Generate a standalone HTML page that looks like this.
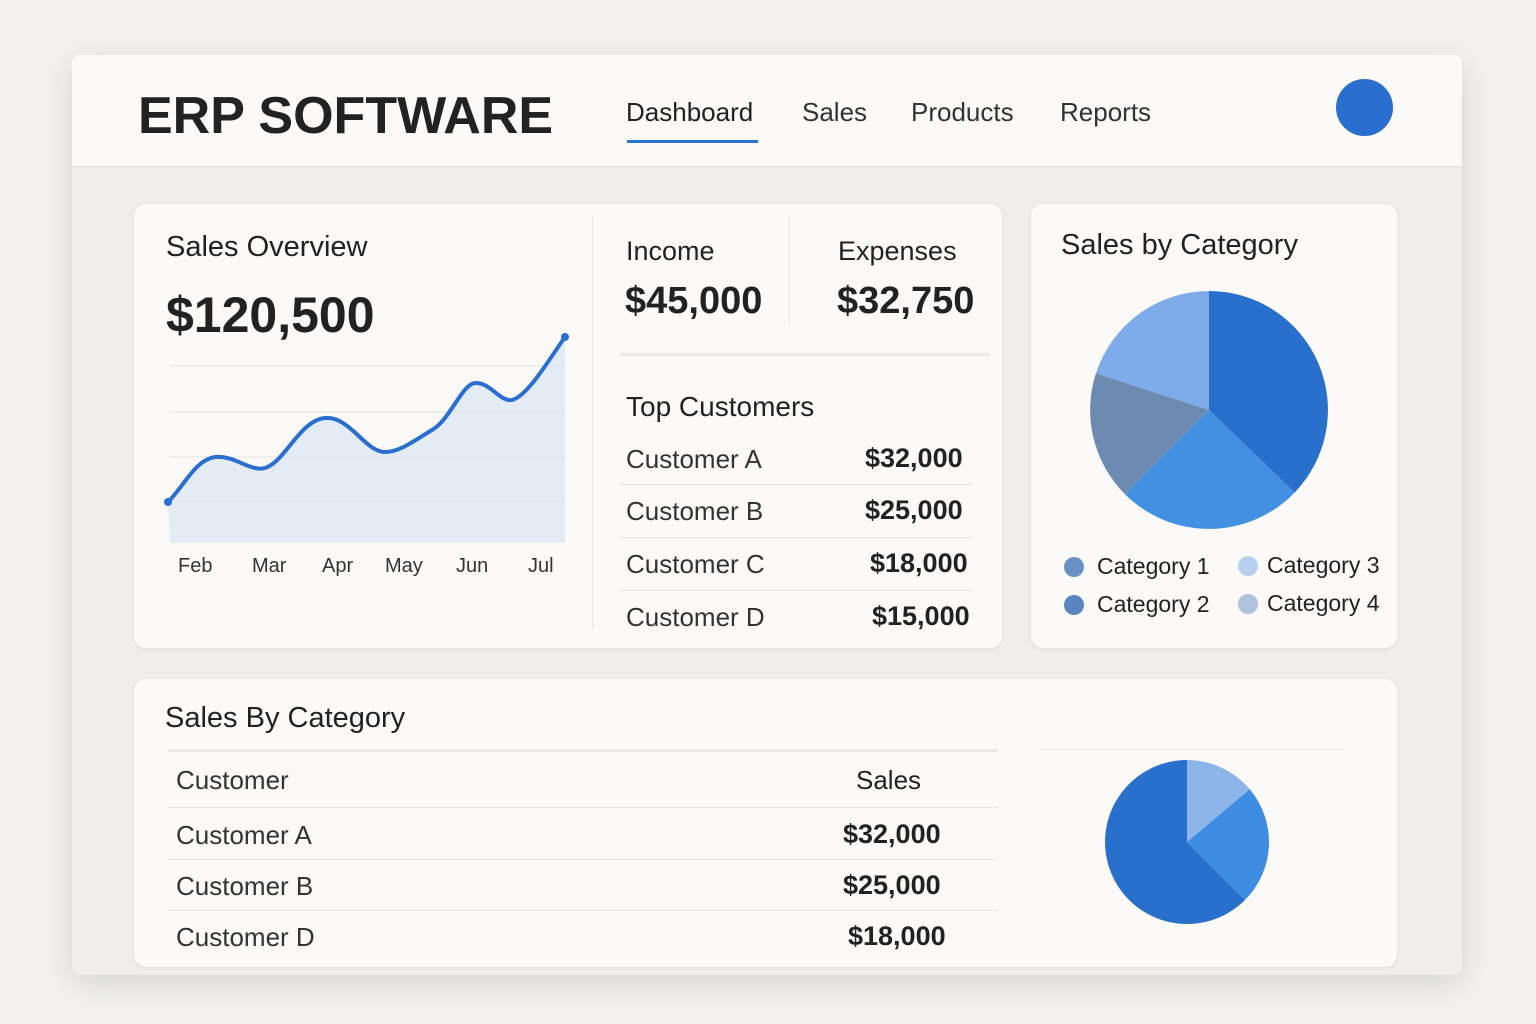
<!DOCTYPE html>
<html><head><meta charset="utf-8"><style>
*{margin:0;padding:0;box-sizing:border-box}
body{width:1536px;height:1024px;background:#f2f1ee;font-family:"Liberation Sans",sans-serif;color:#222;position:relative;overflow:hidden}
.abs{position:absolute}
.frame{left:72px;top:55px;width:1390px;height:920px;background:#efeeeb;border-radius:8px;box-shadow:0 8px 30px rgba(0,0,0,.12)}
.hdr{left:72px;top:55px;width:1390px;height:112px;background:#fbfaf8;border-radius:8px 8px 0 0;border-bottom:1px solid #e2e1de}
.card{background:#fbfaf8;border-radius:12px;box-shadow:0 1px 4px rgba(0,0,0,.08)}
.t{position:absolute;white-space:nowrap}
.line{position:absolute;height:1px;background:#e3e2df}
</style></head><body>
<div class="abs frame"></div>
<div class="abs hdr"></div>
<div class="t" style="left:138px;top:86px;font-size:52px;font-weight:bold;color:#222">ERP SOFTWARE</div>
<div class="t" style="left:626px;top:97px;font-size:26px;color:#222">Dashboard</div>
<div class="abs" style="left:627px;top:140px;width:131px;height:3px;background:#2a74d2"></div>
<div class="t" style="left:802px;top:97px;font-size:26px;color:#333">Sales</div>
<div class="t" style="left:911px;top:97px;font-size:26px;color:#333">Products</div>
<div class="t" style="left:1060px;top:97px;font-size:26px;color:#333">Reports</div>
<div class="abs" style="left:1336px;top:79px;width:57px;height:57px;border-radius:50%;background:#2a6fd0"></div>

<div class="abs card" style="left:134px;top:204px;width:868px;height:444px"></div>
<div class="abs card" style="left:1031px;top:204px;width:366px;height:444px"></div>
<div class="abs card" style="left:134px;top:679px;width:1263px;height:288px"></div>

<div class="t" style="left:166px;top:231px;font-size:29px">Sales Overview</div>
<div class="t" style="left:166px;top:286px;font-size:50px;font-weight:bold">$120,500</div>
<svg class="abs" style="left:0;top:0" width="1536" height="1024">
<g stroke="#e2e1de" stroke-width="1"><line x1="170" y1="366" x2="565" y2="366"/><line x1="170" y1="412" x2="565" y2="412"/><line x1="170" y1="457" x2="565" y2="457"/><line x1="170" y1="501" x2="565" y2="501"/><line x1="170" y1="542" x2="565" y2="542"/></g>
<path d="M168,502 C185,485 195,460 215,457 C235,455 250,472 265,468 C285,462 300,420 325,418 C350,416 365,452 385,452 C400,452 415,440 432,430 C450,420 462,384 475,383 C490,382 500,402 512,400 C528,396 550,358 565,337 L565,542 L170,542 Z" fill="#dde7f4" opacity=".8"/>
<path d="M168,502 C185,485 195,460 215,457 C235,455 250,472 265,468 C285,462 300,420 325,418 C350,416 365,452 385,452 C400,452 415,440 432,430 C450,420 462,384 475,383 C490,382 500,402 512,400 C528,396 550,358 565,337" fill="none" stroke="#2a6fd0" stroke-width="4" stroke-linecap="round"/>
<circle cx="168" cy="502" r="4" fill="#2a6fd0"/><circle cx="565" cy="337" r="4" fill="#2a6fd0"/>
<g transform="translate(1209,410)">
<path d="M0,0 L0,-119 A119,119 0 0 1 85.6,82.6 Z" fill="#2870cc"/>
<path d="M0,0 L85.6,82.6 A119,119 0 0 1 -84.1,84.1 Z" fill="#4190e2"/>
<path d="M0,0 L-84.1,84.1 A119,119 0 0 1 -113,-36.8 Z" fill="#6d8bb0"/>
<path d="M0,0 L-113,-36.8 A119,119 0 0 1 0,-119 Z" fill="#7eacea"/>
</g>
<g transform="translate(1187,842)">
<path d="M0,0 L0,-82 A82,82 0 0 1 62.8,-52.7 Z" fill="#8db5ea"/>
<path d="M0,0 L62.8,-52.7 A82,82 0 0 1 58,58 Z" fill="#3f8de3"/>
<path d="M0,0 L58,58 A82,82 0 1 1 0,-82 Z" fill="#2870cc"/>
</g>
</svg>
<div class="t" style="left:178px;top:555px;font-size:20px;color:#333">Feb</div>
<div class="t" style="left:252px;top:555px;font-size:20px;color:#333">Mar</div>
<div class="t" style="left:322px;top:555px;font-size:20px;color:#333">Apr</div>
<div class="t" style="left:385px;top:555px;font-size:20px;color:#333">May</div>
<div class="t" style="left:456px;top:555px;font-size:20px;color:#333">Jun</div>
<div class="t" style="left:528px;top:555px;font-size:20px;color:#333">Jul</div>

<div class="abs" style="left:592px;top:216px;width:1px;height:414px;background:#e8e7e4"></div>
<div class="abs" style="left:789px;top:216px;width:1px;height:110px;background:#e8e7e4"></div>
<div class="t" style="left:626px;top:236px;font-size:27px">Income</div>
<div class="t" style="left:625px;top:280px;font-size:38px;font-weight:bold">$45,000</div>
<div class="t" style="left:838px;top:236px;font-size:27px">Expenses</div>
<div class="t" style="left:837px;top:280px;font-size:38px;font-weight:bold">$32,750</div>
<div class="line" style="left:620px;top:353px;width:370px;height:3px;background:#ebeae7"></div>
<div class="t" style="left:626px;top:391px;font-size:28px">Top Customers</div>
<div class="t" style="left:626px;top:444px;font-size:26px;color:#333">Customer A</div>
<div class="t" style="left:865px;top:443px;font-size:27px;font-weight:bold">$32,000</div>
<div class="line" style="left:620px;top:484px;width:352px"></div>
<div class="t" style="left:626px;top:496px;font-size:26px;color:#333">Customer B</div>
<div class="t" style="left:865px;top:495px;font-size:27px;font-weight:bold">$25,000</div>
<div class="line" style="left:620px;top:537px;width:352px"></div>
<div class="t" style="left:626px;top:549px;font-size:26px;color:#333">Customer C</div>
<div class="t" style="left:870px;top:548px;font-size:27px;font-weight:bold">$18,000</div>
<div class="line" style="left:620px;top:590px;width:352px"></div>
<div class="t" style="left:626px;top:602px;font-size:26px;color:#333">Customer D</div>
<div class="t" style="left:872px;top:601px;font-size:27px;font-weight:bold">$15,000</div>

<div class="t" style="left:1061px;top:229px;font-size:29px">Sales by Category</div>
<div class="abs" style="left:1064px;top:557px;width:20px;height:20px;border-radius:50%;background:#6790c4"></div>
<div class="t" style="left:1097px;top:553px;font-size:23px;color:#222">Category 1</div>
<div class="abs" style="left:1238px;top:556px;width:20px;height:20px;border-radius:50%;background:#b8d0f0"></div>
<div class="t" style="left:1267px;top:552px;font-size:23px;color:#222">Category 3</div>
<div class="abs" style="left:1064px;top:595px;width:20px;height:20px;border-radius:50%;background:#5a85c0"></div>
<div class="t" style="left:1097px;top:591px;font-size:23px;color:#222">Category 2</div>
<div class="abs" style="left:1238px;top:594px;width:20px;height:20px;border-radius:50%;background:#b0c2df"></div>
<div class="t" style="left:1267px;top:590px;font-size:23px;color:#222">Category 4</div>

<div class="t" style="left:165px;top:702px;font-size:29px">Sales By Category</div>
<div class="line" style="left:168px;top:749px;width:830px;height:3px;background:#ebeae7"></div>
<div class="line" style="left:1040px;top:749px;width:305px;background:#ebeae7"></div>
<div class="t" style="left:176px;top:765px;font-size:26px;color:#333">Customer</div>
<div class="t" style="left:856px;top:765px;font-size:26px">Sales</div>
<div class="line" style="left:168px;top:807px;width:830px"></div>
<div class="t" style="left:176px;top:820px;font-size:26px;color:#333">Customer A</div>
<div class="t" style="left:843px;top:819px;font-size:27px;font-weight:bold">$32,000</div>
<div class="line" style="left:168px;top:859px;width:830px"></div>
<div class="t" style="left:176px;top:871px;font-size:26px;color:#333">Customer B</div>
<div class="t" style="left:843px;top:870px;font-size:27px;font-weight:bold">$25,000</div>
<div class="line" style="left:168px;top:910px;width:830px"></div>
<div class="t" style="left:176px;top:922px;font-size:26px;color:#333">Customer D</div>
<div class="t" style="left:848px;top:921px;font-size:27px;font-weight:bold">$18,000</div>
</body></html>
